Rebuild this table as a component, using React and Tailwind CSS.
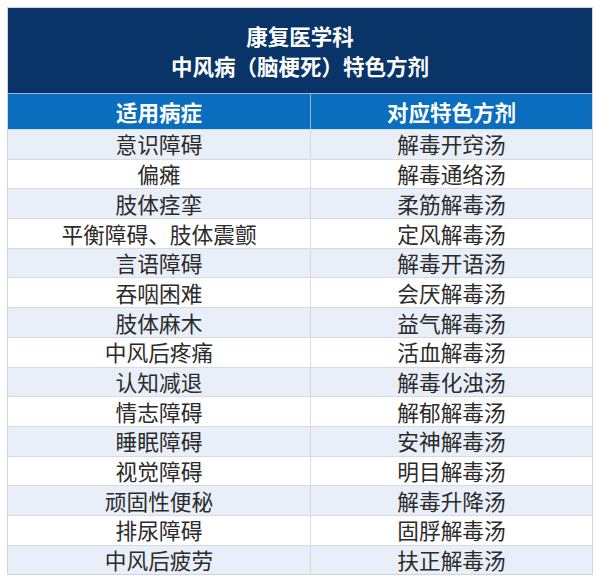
const rows = [
  ["意识障碍", "解毒开窍汤"],
  ["偏瘫", "解毒通络汤"],
  ["肢体痉挛", "柔筋解毒汤"],
  ["平衡障碍、肢体震颤", "定风解毒汤"],
  ["言语障碍", "解毒开语汤"],
  ["吞咽困难", "会厌解毒汤"],
  ["肢体麻木", "益气解毒汤"],
  ["中风后疼痛", "活血解毒汤"],
  ["认知减退", "解毒化浊汤"],
  ["情志障碍", "解郁解毒汤"],
  ["睡眠障碍", "安神解毒汤"],
  ["视觉障碍", "明目解毒汤"],
  ["顽固性便秘", "解毒升降汤"],
  ["排尿障碍", "固脬解毒汤"],
  ["中风后疲劳", "扶正解毒汤"],
];

export default function App() {
  return (
    <div
      className="w-[600px] h-[582px] bg-white pt-[7px] px-[7px]"
      style={{ fontFamily: '"Noto Sans CJK SC", "Noto Sans", sans-serif' }}
    >
      <div className="border border-[#cfd4db]">
        <div className="h-[86px] bg-[#093467] flex flex-col items-center justify-center text-white font-bold text-[21.5px] leading-[30px] border-b border-[#8fb3dc]">
          <div>康复医学科</div>
          <div>中风病（脑梗死）特色方剂</div>
        </div>
        <div className="flex h-[35px] bg-[#0a6dbd] text-white font-bold text-[21.5px] leading-none">
          <div className="w-[303px] flex items-center justify-center border-r border-[#8fbbe6]">适用病症</div>
          <div className="flex-1 flex items-center justify-center">对应特色方剂</div>
        </div>
        {rows.map(([a, b], i) => (
          <div
            key={i}
            className={`flex h-[29.7px] text-[21.7px] text-[#2b2b2b] leading-none border-t border-[#d7dbe0] ${i % 2 === 0 ? "bg-[#e9eff8]" : "bg-white"}`}
          >
            <div className="w-[303px] flex items-center justify-center border-r border-[#d7dbe0]">{a}</div>
            <div className="flex-1 flex items-center justify-center">{b}</div>
          </div>
        ))}
      </div>
    </div>
  );
}
